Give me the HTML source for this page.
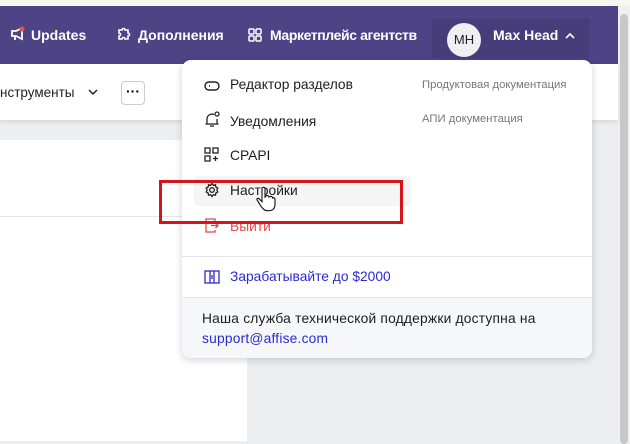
<!DOCTYPE html>
<html><head><meta charset="utf-8"><style>
*{box-sizing:border-box;margin:0;padding:0}
body{width:630px;height:441px;overflow:hidden;font-family:"Liberation Sans",sans-serif;background:#eceef2;position:relative}
.top{position:absolute;left:0;top:0;width:630px;height:6px;background:#f6f7ee}
.hdr{position:absolute;left:0;top:6px;width:618px;height:58px;background:#4d4385;color:#fff;font-weight:bold;font-size:14px}
.hdr span{position:absolute;top:21px}
.user{position:absolute;left:432px;top:12px;width:158px;height:40px;background:#463d7a;border-radius:4px}
.av{position:absolute;left:447px;top:17px;width:34px;height:34px;border-radius:50%;background:#eeeef3;color:#222;font-size:13px;font-weight:normal;text-align:center;line-height:34px}
.sb{position:absolute;left:618px;top:6px;width:12px;height:435px;background:#f0f0f0}
.sb i{position:absolute;left:2px;top:8px;width:8px;height:430px;background:#c8c8c8;border-radius:4px}
.tb{position:absolute;left:0;top:64px;width:618px;height:56px;background:#fff;box-shadow:0 2px 4px rgba(0,0,0,.1)}
.panel{position:absolute;left:0;top:140px;width:247px;height:301px;background:#fff}
.panel i{position:absolute;left:0;top:76px;width:247px;height:1px;background:#e3e5ea}
.dd{position:absolute;left:182px;top:60px;width:410px;height:298px;background:#fff;border-radius:9px;box-shadow:0 2px 8px rgba(0,0,0,.18);overflow:hidden;font-size:13.8px;color:#1d1d1f}
.it{position:absolute;left:48px}
.ic{position:absolute;left:22px}
.doc{position:absolute;left:240px;font-size:11.3px;color:#777}
.foot{position:absolute;left:0;top:237px;width:410px;height:61px;background:#f5f7fb;border-top:1px solid #e3e5ea;font-size:13.8px;line-height:20px;padding:11px 0 0 20px;letter-spacing:.2px}
</style></head><body>
<div class="top"></div>
<div class="hdr">
<svg style="position:absolute;left:10px;top:20px" width="16" height="16" viewBox="0 0 16 16" fill="none" stroke="#fff" stroke-width="1.8"><path d="M2 5h4l6-3v11l-6-3H2z M5 10v4"/><circle cx="12" cy="3" r="2.5" fill="#e5533b" stroke="none"/></svg>
<span style="left:31px">Updates</span>
<svg style="position:absolute;left:116px;top:21px" width="15" height="15" viewBox="0 0 15 15" fill="none" stroke="#fff" stroke-width="1.6"><path d="M3 3h3a1.5 1.5 0 0 1 3 0h3v3a1.5 1.5 0 0 1 0 3v3H9a1.5 1.5 0 0 0-3 0H3V9a1.5 1.5 0 0 0 0-3z"/></svg>
<span style="left:138px">Дополнения</span>
<svg style="position:absolute;left:248px;top:22px" width="14" height="14" viewBox="0 0 14 14" fill="none" stroke="#fff" stroke-width="1.5"><rect x="1" y="1" width="5" height="5" rx="1"/><rect x="8" y="1" width="5" height="5" rx="1"/><rect x="1" y="8" width="5" height="5" rx="1"/><rect x="8" y="8" width="5" height="5" rx="1"/></svg>
<span style="left:270px;letter-spacing:-.4px">Маркетплейс агентств</span>
<div class="user"></div>
<div class="av">MH</div>
<span style="left:493px">Max Head</span>
<svg style="position:absolute;left:565px;top:26px" width="10" height="7" viewBox="0 0 10 7" fill="none" stroke="#fff" stroke-width="1.6"><path d="M1 6l4-4 4 4"/></svg>
</div>
<div class="sb"><i></i></div>
<div class="tb">
<span style="position:absolute;left:0;top:21px;font-size:13.5px;color:#222">нструменты</span>
<svg style="position:absolute;left:88px;top:25px" width="10" height="7" viewBox="0 0 10 7" fill="none" stroke="#222" stroke-width="1.5"><path d="M1 1l4 4 4-4"/></svg>
<div style="position:absolute;left:121px;top:17px;width:24px;height:24px;border:1px solid #ccc;border-radius:4px;text-align:center;font-weight:bold;line-height:18px;font-size:14px">···</div>
</div>
<div class="panel"><i></i></div>
<div class="dd">
<svg class="ic" style="top:20px" width="16" height="12" viewBox="0 0 16 12" fill="none" stroke="#222" stroke-width="1.4"><rect x="1" y="2" width="14" height="8" rx="4"/><path d="M5 6h1"/></svg>
<div class="it" style="top:17px">Редактор разделов</div><div class="doc" style="top:19px">Продуктовая документация</div>
<svg class="ic" style="top:51px" width="16" height="17" viewBox="0 0 16 17" fill="none" stroke="#222" stroke-width="1.3"><path d="M3 13V8a5 5 0 0 1 7-4.5M13 8v5M1.5 13h13M6 15h4"/><circle cx="13" cy="3" r="2"/></svg>
<div class="it" style="top:54px">Уведомления</div><div class="doc" style="top:53px">АПИ документация</div>
<svg class="ic" style="top:87px" width="15" height="15" viewBox="0 0 15 15" fill="none" stroke="#222" stroke-width="1.3"><rect x="1" y="1" width="5" height="5"/><rect x="9" y="1" width="5" height="5"/><rect x="1" y="9" width="5" height="5"/><path d="M11.5 9v5M9 11.5h5"/></svg>
<div class="it" style="top:88px">CPAPI</div>
<div style="position:absolute;left:12px;top:116px;width:217px;height:30px;background:#f5f5f6;border-radius:4px"></div>
<svg class="ic" style="top:122px" width="16" height="16" viewBox="0 0 16 16" fill="none" stroke="#222" stroke-width="1.3"><circle cx="8" cy="8" r="2.3"/><path d="M8 1.5l1.3 1.8 2.2-.5.3 2.2 2 1-1 2 1 2-2 1-.3 2.2-2.2-.5L8 14.5l-1.3-1.8-2.2.5-.3-2.2-2-1 1-2-1-2 2-1 .3-2.2 2.2.5z"/></svg>
<div class="it" style="top:123px">Настройки</div>
<svg class="ic" style="top:157px" width="15" height="17" viewBox="0 0 15 17" fill="none" stroke="#e5484d" stroke-width="1.3"><path d="M11 4V2H2v13h9v-2M7 8.5h7M11.5 6l2.5 2.5-2.5 2.5"/></svg>
<div class="it" style="top:159px;color:#e5484d">Выйти</div>
<div style="position:absolute;left:0;top:196px;width:410px;height:1px;background:#e3e5ea"></div>
<svg class="ic" style="top:210px" width="16" height="14" viewBox="0 0 16 14" fill="none" stroke="#2b2bd0" stroke-width="1.3"><rect x="1" y="1" width="14" height="12"/><path d="M6 1v12M10 1v12M8 5v4"/></svg>
<div class="it" style="top:209px;color:#2b2bd0">Зарабатывайте до $2000</div>
<div class="foot">Наша служба технической поддержки доступна на<br><span style="color:#2b2bd0">support@affise.com</span></div>
</div>
<div style="position:absolute;left:159px;top:180px;width:244px;height:44px;border:3px solid #d7141a"></div>
<svg style="position:absolute;left:255px;top:186px" width="22" height="26" viewBox="0 0 22 26"><path d="M7 2c1-1 3-1 3 1v8l1-1c1-1 3 0 3 1l1-.5c1-.5 2.5 0 2.5 1.5l.5-.3c1 0 2 .5 2 2v5c0 3-2 6-6 6H12c-3 0-5-3-7-6l-3-5c-.5-1 1-2 2-1l3 3z" fill="#fff" stroke="#111" stroke-width="1.1"/></svg>
</body></html>
